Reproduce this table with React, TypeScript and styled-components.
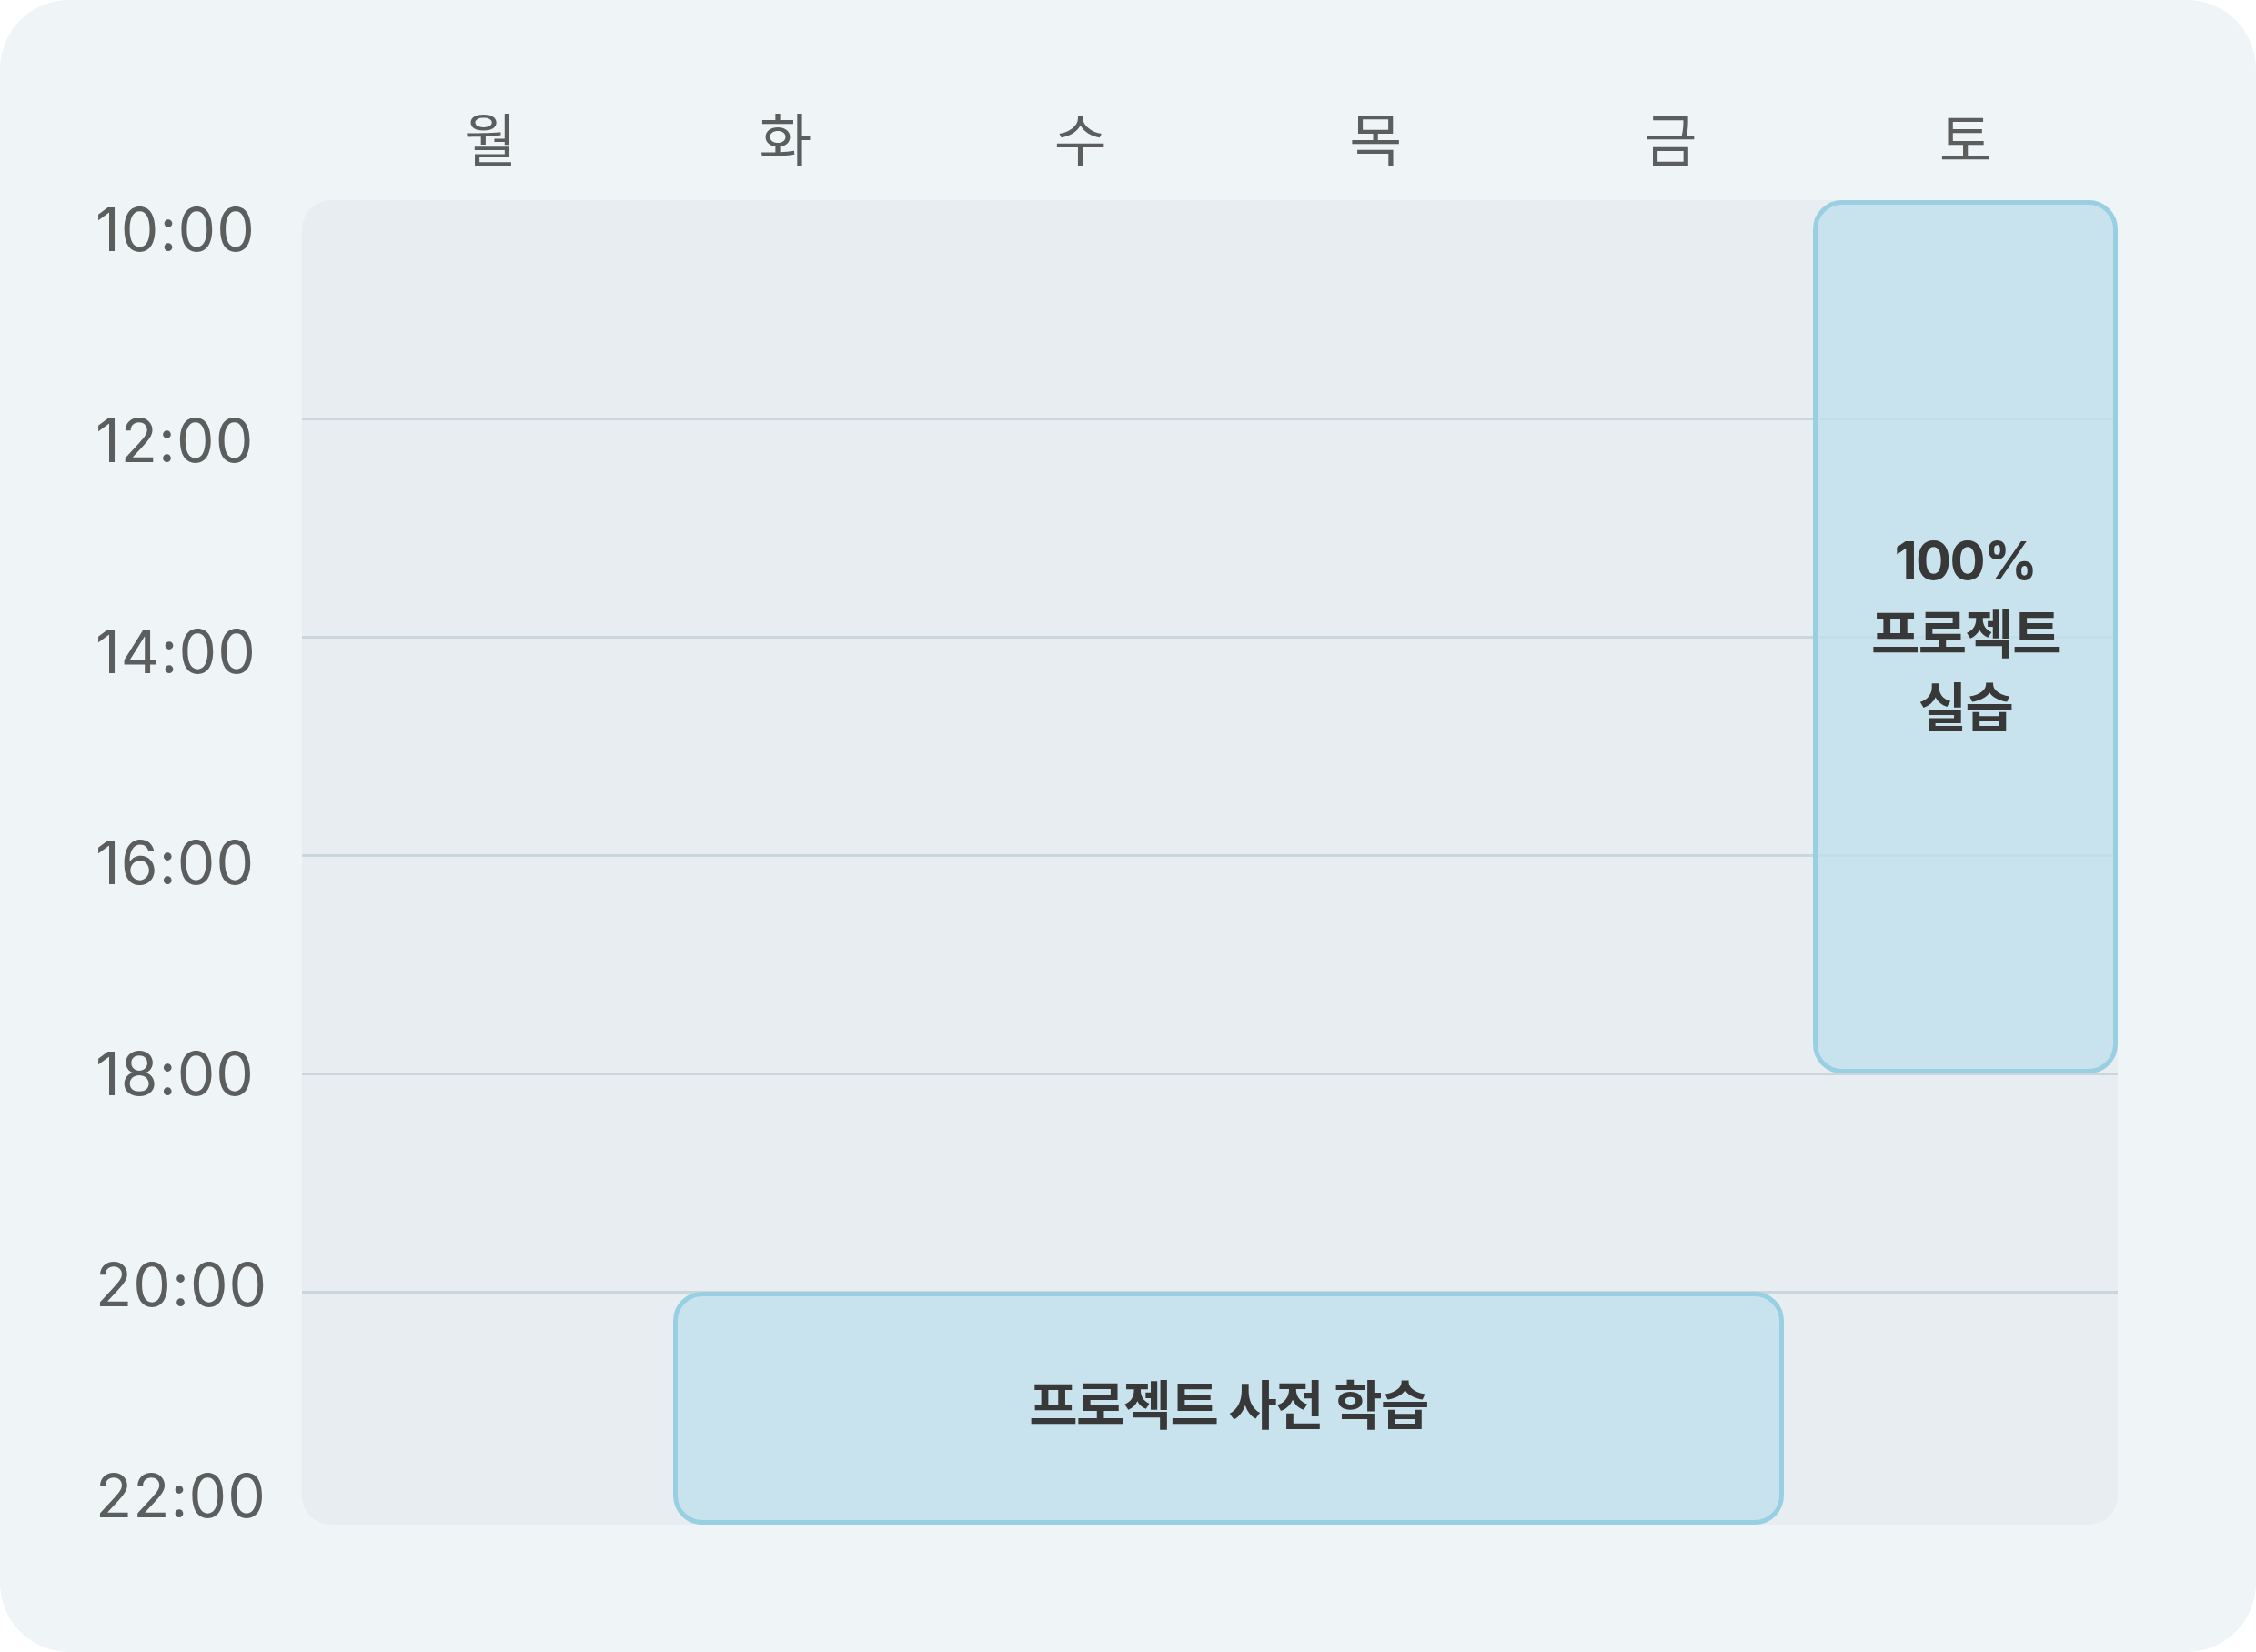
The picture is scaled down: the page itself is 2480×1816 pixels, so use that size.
import React from "react";
import styled, { createGlobalStyle } from "styled-components";

const GlobalStyle = createGlobalStyle`
  html, body {
    margin: 0;
    padding: 0;
    background: #ffffff;
  }
  * { box-sizing: border-box; }
`;

const Card = styled.div`
  width: 2480px;
  height: 1816px;
  background: #eff4f7;
  border-radius: 76px;
  padding-top: 110px;
  display: flex;
  flex-direction: column;
  font-family: "Inter", "Noto Sans CJK KR", sans-serif;
`;

const HeaderRow = styled.div`
  display: grid;
  grid-template-columns: repeat(6, 1fr);
  margin-left: 377px;
  width: 1946px;
  height: 80px;
  margin-bottom: 30px;
`;

const DayLabel = styled.div`
  display: flex;
  align-items: center;
  justify-content: center;
  font-family: "Noto Sans CJK KR", sans-serif;
  font-size: 63px;
  line-height: 80px;
  color: #5c5e5e;
  font-weight: 400;
`;

const Body = styled.div`
  display: flex;
  align-items: stretch;
`;

const TimeColumn = styled.div`
  width: 332px;
  height: 1456px;
  padding-left: 105px;
  display: flex;
  flex-direction: column;
  justify-content: space-between;
`;

const TimeLabel = styled.div`
  font-family: "Inter", sans-serif;
  font-size: 66px;
  line-height: 64px;
  height: 64px;
  color: #5c5e5e;
  letter-spacing: 1px;
`;

const Grid = styled.div`
  position: relative;
  width: 1996px;
  height: 1456px;
  background: #e7edf0;
  border-radius: 32px;
  display: grid;
  grid-template-rows: repeat(5, 240px) 1fr;
`;

const Slot = styled.div<{ $line: boolean }>`
  border-top: ${(p) => (p.$line ? "3px solid #cbd6db" : "none")};
  margin-top: ${(p) => (p.$line ? "-1.5px" : "0")};
`;

const Event = styled.div<{ $left: string; $width: string; $top: string; $height: string }>`
  position: absolute;
  left: ${(p) => p.$left};
  width: ${(p) => p.$width};
  top: ${(p) => p.$top};
  height: ${(p) => p.$height};
  background: rgba(192, 224, 237, 0.78);
  border: 5px solid #99cfe3;
  border-radius: 32px;
  display: flex;
  align-items: center;
  justify-content: center;
  text-align: center;
`;

const EventTitle = styled.div`
  font-family: "Inter", "Noto Sans CJK KR", sans-serif;
  font-weight: 700;
  font-size: 58px;
  line-height: 81px;
  color: #383838;
  letter-spacing: -1.6px;
  transform: translateY(-3px);
`;

const days = ["월", "화", "수", "목", "금", "토"];
const times = ["10:00", "12:00", "14:00", "16:00", "18:00", "20:00", "22:00"];

export default function App() {
  return (
    <>
      <GlobalStyle />
      <Card>
        <HeaderRow>
          {days.map((d) => (
            <DayLabel key={d}>{d}</DayLabel>
          ))}
        </HeaderRow>
        <Body>
          <TimeColumn>
            {times.map((t) => (
              <TimeLabel key={t}>{t}</TimeLabel>
            ))}
          </TimeColumn>
          <Grid>
            {Array.from({ length: 6 }).map((_, i) => (
              <Slot key={i} $line={i > 0} />
            ))}
            <Event $left="1661px" $width="335px" $top="0px" $height="960px">
              <EventTitle>
                100%
                <br />
                프로젝트
                <br />
                실습
              </EventTitle>
            </Event>
            <Event $left="408px" $width="1221px" $top="1200px" $height="256px">
              <EventTitle>프로젝트 사전 학습</EventTitle>
            </Event>
          </Grid>
        </Body>
      </Card>
    </>
  );
}
